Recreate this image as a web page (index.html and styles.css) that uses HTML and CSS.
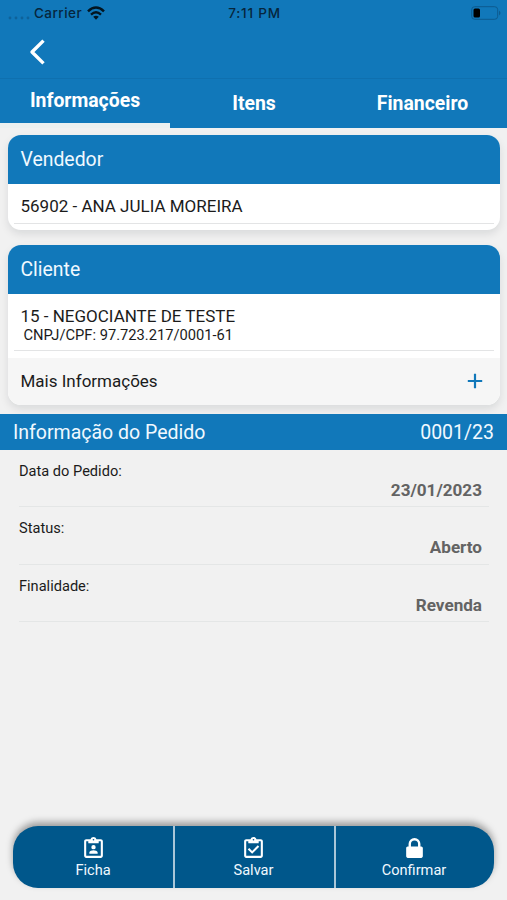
FILE: index.html
```html
<!DOCTYPE html>
<html lang="pt-BR">
<head>
    <meta charset="UTF-8">
    <meta name="viewport" content="width=device-width, initial-scale=1.0">
    <title>Pedido</title>
    <link rel="stylesheet" href="styles.css">
</head>
<body>
    <header class="header">
        <div class="status-bar">
            <div class="carrier">
                <svg class="signal" width="22" height="4" viewBox="0 0 22 4">
                    <circle cx="2" cy="2" r="1.4"/>
                    <circle cx="8" cy="2" r="1.4"/>
                    <circle cx="14" cy="2" r="1.4"/>
                    <circle cx="20" cy="2" r="1.4"/>
                </svg>
                <span>Carrier</span>
                <svg class="wifi" width="18" height="14" viewBox="0 0 18 14">
                    <path d="M1 5.3Q9-2.3 17 5.3" stroke-width="2.5"/>
                    <path d="M4 8.6Q9 4 14 8.6" stroke-width="2.4"/>
                    <path class="wifi-dot" d="M6.2 10.8Q9 8.7 11.8 10.8L9 13.8Z"/>
                </svg>
            </div>
            <span class="clock">7:11 PM</span>
            <svg class="battery" width="30" height="14" viewBox="0 0 30 14">
                <rect class="battery-case" x="0.7" y="0.7" width="26" height="12.6" rx="3"/>
                <path class="battery-cap" d="M28 4.5Q31 7 28 9.5Z"/>
                <rect x="2.5" y="2.5" width="6.5" height="9" rx="1.5"/>
            </svg>
        </div>
        <div class="nav-bar">
            <svg class="back" width="16" height="26" viewBox="0 0 16 26">
                <path d="M14.5 1.6L3 13L14.5 24.4"/>
            </svg>
        </div>
        <nav class="tabs">
            <div class="tab active">Informações</div>
            <div class="tab">Itens</div>
            <div class="tab">Financeiro</div>
        </nav>
    </header>

    <main class="content">
        <section class="card seller">
            <h2>Vendedor</h2>
            <div class="card-body">
                <p class="name">56902 - ANA JULIA MOREIRA</p>
            </div>
        </section>

        <section class="card client">
            <h2>Cliente</h2>
            <div class="card-body">
                <p class="name">15 - NEGOCIANTE DE TESTE</p>
                <p class="doc">CNPJ/CPF: 97.723.217/0001-61</p>
            </div>
            <div class="more">
                <span>Mais Informações</span>
                <svg width="16" height="16" viewBox="0 0 16 16">
                    <path d="M8 0.8V15.2M0.8 8H15.2"/>
                </svg>
            </div>
        </section>

        <div class="order-title">
            <span>Informação do Pedido</span>
            <span class="order-number">0001/23</span>
        </div>

        <div class="order-info">
            <div class="row">
                <span class="label">Data do Pedido:</span>
                <span class="value">23/01/2023</span>
            </div>
            <div class="row">
                <span class="label">Status:</span>
                <span class="value">Aberto</span>
            </div>
            <div class="row">
                <span class="label">Finalidade:</span>
                <span class="value">Revenda</span>
            </div>
        </div>
    </main>

    <footer class="actions">
        <div class="action">
            <svg width="25" height="25" viewBox="0 0 24 24">
                <path fill-rule="evenodd" d="M19 3h-4.2C14.4 1.8 13.3 1 12 1s-2.4.8-2.8 2H5c-1.1 0-2 .9-2 2v14c0 1.1.9 2 2 2h14c1.1 0 2-.9 2-2V5c0-1.1-.9-2-2-2zM12 2.8a.8.8 0 1 1 0 1.6.8.8 0 0 1 0-1.6zM5 5h2v2h10V5h2v14H5zM12 8.6a2.1 2.1 0 1 0 0 4.2 2.1 2.1 0 0 0 0-4.2zM8 17h8v-1.1c0-1.5-2.6-2.2-4-2.2s-4 .7-4 2.2z"/>
            </svg>
            <span>Ficha</span>
        </div>
        <div class="action">
            <svg width="25" height="25" viewBox="0 0 24 24">
                <path fill-rule="evenodd" d="M19 3h-4.2C14.4 1.8 13.3 1 12 1s-2.4.8-2.8 2H5c-1.1 0-2 .9-2 2v14c0 1.1.9 2 2 2h14c1.1 0 2-.9 2-2V5c0-1.1-.9-2-2-2zM12 2.8a.8.8 0 1 1 0 1.6.8.8 0 0 1 0-1.6zM5 5h2v2h10V5h2v14H5zM17.5 10.3l-1.4-1.4-5.4 5.4-2.8-2.8-1.4 1.4 4.2 4.2z"/>
            </svg>
            <span>Salvar</span>
        </div>
        <div class="action">
            <svg width="25" height="25" viewBox="0 0 24 24">
                <path fill-rule="evenodd" d="M18.5 10H17.7V7.6a5.7 5.7 0 0 0-11.4 0V10h-.8c-.8 0-1.5.7-1.5 1.5v8c0 .8.7 1.5 1.5 1.5h13c.8 0 1.5-.7 1.5-1.5v-8c0-.8-.7-1.5-1.5-1.5zM8.6 10V7.6a3.4 3.4 0 0 1 6.8 0V10z"/>
            </svg>
            <span>Confirmar</span>
        </div>
    </footer>
</body>
</html>
```

FILE: styles.css
```css
* {
    box-sizing: border-box;
}

body {
    font-family: Roboto, sans-serif;
    background: #f1f1f1;
    color: #1b1b1b;
    display: flex;
    flex-direction: column;
    height: 900px;
    margin: 0;
    overflow: hidden;
}

h2, p {
    margin: 0;
    font-weight: 400;
}

svg {
    display: block;
    flex: none;
}

.header {
    height: 128px;
    background: #1178ba;
    color: #fff;
}

.status-bar {
    display: grid;
    grid-template-columns: 1fr auto 1fr;
    align-items: center;
    height: 26px;
    padding: 0 6px 0 8px;
    font-family: Inter, sans-serif;
    font-size: 13.5px;
    font-weight: 500;
    color: #06263d;
}

.carrier {
    display: flex;
    align-items: center;
    gap: 5px;
    letter-spacing: 0.45px;
}

.carrier span {
    margin-left: -1px;
}

.clock {
    letter-spacing: 0.8px;
}

.signal {
    margin-top: 9px;
    fill: #0e629a;
}

.wifi path {
    fill: none;
    stroke: #031520;
}

.wifi .wifi-dot {
    fill: #031520;
    stroke: none;
}

.battery {
    justify-self: end;
}

.battery-case {
    fill: none;
    stroke: #0d5b8f;
}

.battery-cap {
    fill: #0d5b8f;
}

.nav-bar {
    display: flex;
    align-items: center;
    height: 53px;
    padding-left: 29px;
    border-bottom: 1px solid #0f70af;
}

.back path {
    fill: none;
    stroke: #fff;
    stroke-width: 3.4;
    stroke-linejoin: round;
}

.tabs {
    display: grid;
    grid-template-columns: 170px 168px 169px;
    height: 49px;
}

.tab {
    display: flex;
    align-items: center;
    justify-content: center;
    font-size: 19.4px;
    font-weight: 700;
}

.tab.active {
    padding-bottom: 1px;
    border-bottom: 5px solid #ebf0f0;
}

.content {
    flex: 1;
}

.card {
    margin: 0 7px 15px 8px;
    border-radius: 13px;
    overflow: hidden;
    background: #fff;
    box-shadow: 0 4px 8px rgba(0, 20, 30, 0.1);
}

.card h2 {
    height: 49px;
    padding-left: 12.5px;
    background: #1178ba;
    color: #f0f9ff;
    font-size: 19.4px;
    line-height: 49px;
}

.seller {
    height: 95px;
    margin-top: 7px;
}

.client {
    height: 160px;
    margin-bottom: 9px;
}

.card-body {
    margin: 0 6px;
    padding-left: 6.5px;
    border-bottom: 1px solid #e3e4e5;
}

.seller .card-body {
    height: 40px;
    padding-top: 12px;
}

.client .card-body {
    height: 57px;
    padding-top: 12px;
}

.name {
    font-size: 17px;
    line-height: 20px;
}

.doc {
    padding-left: 3px;
    font-size: 14.7px;
    line-height: 19px;
}

.more {
    display: flex;
    align-items: center;
    justify-content: space-between;
    height: 47px;
    margin-top: 7px;
    padding: 0 17px 2px 12.5px;
    background: #f6f6f6;
    font-size: 17px;
}

.more path {
    stroke: #1178ba;
    stroke-width: 2.2;
}

.order-title {
    display: flex;
    align-items: center;
    justify-content: space-between;
    height: 36px;
    padding: 0 13px;
    background: #1178ba;
    color: #f0f9ff;
    font-size: 19.5px;
}

.order-info {
    padding: 0 18px 0 19px;
}

.row {
    display: flex;
    flex-direction: column;
    height: 57.3px;
    padding: 13px 7px 0 0;
    border-bottom: 1px solid #e4e6e6;
}

.label {
    font-size: 14.6px;
    line-height: 17px;
}

.value {
    align-self: flex-end;
    font-size: 17.1px;
    font-weight: 700;
    line-height: 20px;
    color: #636363;
}

.actions {
    display: grid;
    grid-template-columns: 160px 161px 160px;
    height: 62px;
    margin: 0 13px 12px 13px;
    border-radius: 25px;
    background: #00578b;
    box-shadow: 0 -4px 7px rgba(0, 0, 0, 0.35);
    color: #f0f9ff;
}

.action {
    display: flex;
    flex-direction: column;
    align-items: center;
    padding-top: 10px;
    font-size: 14.6px;
    line-height: 18px;
}

.action + .action {
    padding-right: 2px;
    border-left: 2px solid #a9c6d8;
}

.action svg {
    fill: #fff;
}
```
